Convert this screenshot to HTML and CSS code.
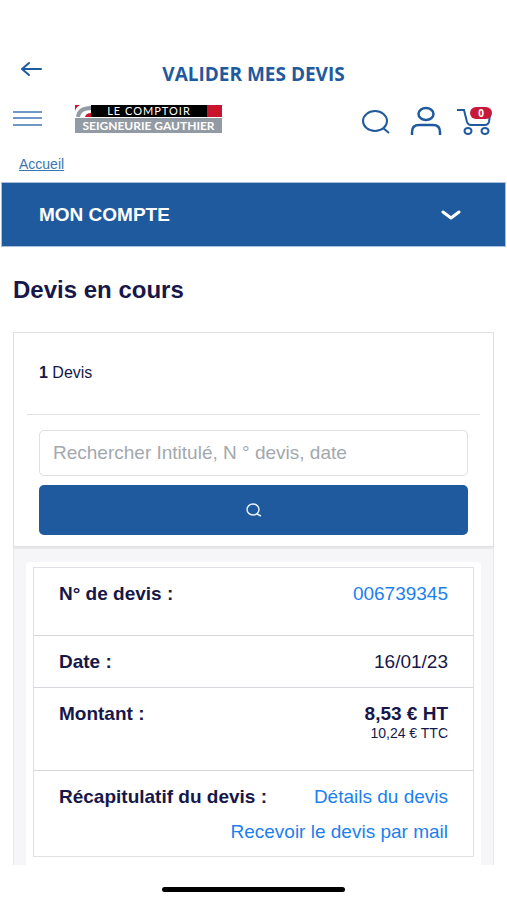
FILE: index.html
```html
<!DOCTYPE html>
<html lang="fr">
<head>
<meta charset="utf-8">
<meta name="viewport" content="width=device-width, initial-scale=1">
<title>Valider mes devis</title>
<link rel="stylesheet" href="styles.css">
</head>
<body>
<header>
  <div class="titlebar">
    <button class="icon-button" aria-label="Retour">
      <svg width="24" height="18" viewBox="0 0 24 18" fill="none" stroke="#1f5a9e" stroke-width="2" stroke-linecap="round" stroke-linejoin="round"><path d="M9 3 2 9l7 6M2 9h19"/></svg>
    </button>
    <h1>VALIDER MES DEVIS</h1>
  </div>
  <div class="toolbar">
    <button class="icon-button" aria-label="Menu">
      <svg width="30" height="18" viewBox="0 0 30 18" stroke="#6f98c6" stroke-width="2"><path d="M0 2h29M0 8h29M0 15h29"/></svg>
    </button>
    <a class="logo" href="#">
      <span class="logo-top">
        <svg width="16" height="12" viewBox="0 0 16 12"><path fill="#fff" d="M0 0h16v12H0z"/><path fill="#c8152d" d="M0 0h5Q1 2 0 6zM10 12q1-4 6-4v4z"/><path fill="none" stroke="#929ba3" stroke-width="4" d="M3 12Q4 3 16 3"/></svg>
        <span class="logo-name">LE COMPTOIR</span>
        <span class="logo-red"></span>
      </span>
      <span class="logo-bottom">SEIGNEURIE GAUTHIER</span>
    </a>
    <nav class="actions">
      <button class="icon-button find" aria-label="Rechercher">
        <svg width="30" height="28" viewBox="0 0 30 28" fill="none" stroke="#1f5a9e" stroke-width="2"><ellipse cx="15" cy="14" rx="12" ry="10"/><path d="m23 21 6 5"/></svg>
      </button>
      <button class="icon-button" aria-label="Mon profil">
        <svg width="32" height="30" viewBox="0 0 32 30" fill="none" stroke="#1f5a9e" stroke-width="2.500"><ellipse cx="16" cy="8" rx="7.500" ry="6"/><path d="M2 29v-3q0-7 7-7h14q7 0 7 7v3"/></svg>
      </button>
      <button class="icon-button cart" aria-label="Panier">
        <svg width="36" height="28" viewBox="0 0 36 28" fill="none" stroke="#1f5a9e" stroke-width="2"><path d="M1 3h7l3 12q1 3 4 3h14q3 0 4-3l1-7"/><ellipse cx="12" cy="24" rx="3.500" ry="3"/><ellipse cx="29" cy="24" rx="3.500" ry="3"/></svg>
        <span class="badge">0</span>
      </button>
    </nav>
  </div>
  <a class="breadcrumb" href="#">Accueil</a>
</header>
<main>
  <button class="account">
    <span>MON COMPTE</span>
    <svg width="20" height="12" viewBox="0 0 20 12" fill="none" stroke="#fff" stroke-width="3" stroke-linecap="round" stroke-linejoin="round"><path d="m2 3 8 6 8-6"/></svg>
  </button>
  <h2>Devis en cours</h2>
  <section class="search-card">
    <p class="count"><strong>1</strong> Devis</p>
    <form class="search">
      <input type="text" aria-label="Rechercher un devis" placeholder="Rechercher Intitulé, N ° devis, date">
      <button type="button" aria-label="Lancer la recherche">
        <svg width="16" height="14" viewBox="0 0 16 14" fill="none" stroke="#e8f1fa" stroke-width="1.400"><ellipse cx="7" cy="6.500" rx="6" ry="5.500"/><path d="m11 11 4 2"/></svg>
      </button>
    </form>
  </section>
  <section class="results">
    <div class="quote">
      <dl>
        <div class="row number"><dt>N° de devis :</dt><dd><a href="#">006739345</a></dd></div>
        <div class="row date"><dt>Date :</dt><dd>16/01/23</dd></div>
        <div class="row amount"><dt>Montant :</dt><dd><strong>8,53 € HT</strong><small>10,24 € TTC</small></dd></div>
        <div class="row summary"><dt>Récapitulatif du devis :</dt><dd><a href="#">Détails du devis</a></dd><dd class="full"><a href="#">Recevoir le devis par mail</a></dd></div>
      </dl>
    </div>
  </section>
</main>
<footer><span class="home-indicator"></span></footer>
</body>
</html>
```

FILE: styles.css
```css
* { box-sizing: border-box; }

body {
  margin: 0;
  background: #fff;
  color: #17174a;
  font: 19px/24px "Liberation Sans", Arial, sans-serif;
}

button { font: inherit; border: 0; cursor: pointer; }
svg { display: block; }
a { color: #1c80ee; text-decoration: none; }

.icon-button { padding: 0; background: none; }

.titlebar {
  display: grid;
  grid-template-columns: 24px 1fr 24px;
  align-items: start;
  padding: 60px 20px 0;
}

h1 {
  margin: 2px 0 0;
  color: #1f5a9e;
  font: bold 19px/24px "Open Sans", sans-serif;
  text-align: center;
}

.toolbar {
  display: flex;
  align-items: center;
  height: 50px;
  margin-top: 8px;
  padding: 0 15px 0 13px;
}

.toolbar > .icon-button { margin-right: 32px; }

.logo {
  width: 147px;
  color: #fff;
  font: 11px/12px Lato, sans-serif;
}

.logo-top { display: flex; height: 12px; background: #000; }
.logo-name { flex: 1; text-align: center; letter-spacing: 1px; white-space: nowrap; }
.logo-red { width: 15px; background: #c8152d; }

.logo-bottom {
  display: block;
  margin-top: 1px;
  background: #929ba3;
  font: bold 12px/15px Lato, sans-serif;
  text-align: center;
  white-space: nowrap;
}

.actions {
  display: flex;
  align-items: center;
  gap: 14px;
  margin-left: auto;
  padding-top: 4px;
}

.find { margin-right: 6px; }
.cart { position: relative; }

.badge {
  position: absolute;
  top: 0;
  right: 0;
  width: 22px;
  border-radius: 6px;
  background: #c8193a;
  color: #fff;
  font: bold 10px/12px "Open Sans", sans-serif;
  text-align: center;
}

.breadcrumb {
  display: block;
  width: max-content;
  margin: 12px 19px 0;
  color: #3976ae;
  font-size: 14px;
  line-height: 16px;
  text-decoration: underline;
}

.account {
  display: flex;
  align-items: center;
  justify-content: space-between;
  width: calc(100% - 2px);
  height: 65px;
  margin: 10px 1px 0;
  padding: 0 44px 0 37px;
  border: 1px solid #a9c0dc;
  background: #1f5a9e;
  color: #fff;
  font-weight: bold;
}

h2 {
  margin: 30px 13px 29px;
  font-size: 24px;
  line-height: 26px;
}

.search-card {
  margin: 0 13px;
  padding: 0 13px 11px;
  border: 1px solid #e0e0e4;
}

.count {
  margin: 0;
  padding: 28px 12px 29px;
  border-bottom: 1px solid #e0e0e4;
  font-size: 16px;
}

.search {
  display: grid;
  gap: 9px;
  padding: 15px 12px 0;
}

.search input {
  width: 100%;
  height: 46px;
  padding: 0 13px;
  border: 1px solid #dddfe2;
  border-radius: 5px;
  color: inherit;
  font: inherit;
}

.search input::placeholder { color: #a3a8ad; opacity: 1; }

.search button {
  display: grid;
  place-items: center;
  height: 50px;
  border-radius: 5px;
  background: #1f5a9e;
}

.results {
  margin: 0 13px;
  padding: 13px 12px 0;
  border: solid #e9e9ec;
  border-width: 2px 1px 0;
  background: #f6f6f9;
}

.quote {
  padding: 5px 7px 8px;
  border-radius: 4px 4px 0 0;
  background: #fff;
}

dl { margin: 0; border: 1px solid #e0e1e5; }

.row {
  display: flex;
  flex-wrap: wrap;
  justify-content: space-between;
  align-items: start;
  padding: 14px 25px;
}

.row + .row { border-top: 1px solid #d6d8de; }
.number { padding-bottom: 29px; }
.date { padding-bottom: 13px; }
.amount { padding-bottom: 30px; }
.summary { row-gap: 11px; padding-bottom: 12px; }

dt { font-weight: bold; }
dd { margin: 0; text-align: right; }
dd.full { flex-basis: 100%; }
dd strong, dd small { display: block; }
dd small { font-size: 14px; line-height: 14px; }

footer { display: flex; justify-content: center; padding: 22px 0 8px; }

.home-indicator {
  width: 36%;
  height: 5px;
  border-radius: 3px;
  background: #000;
}
```
